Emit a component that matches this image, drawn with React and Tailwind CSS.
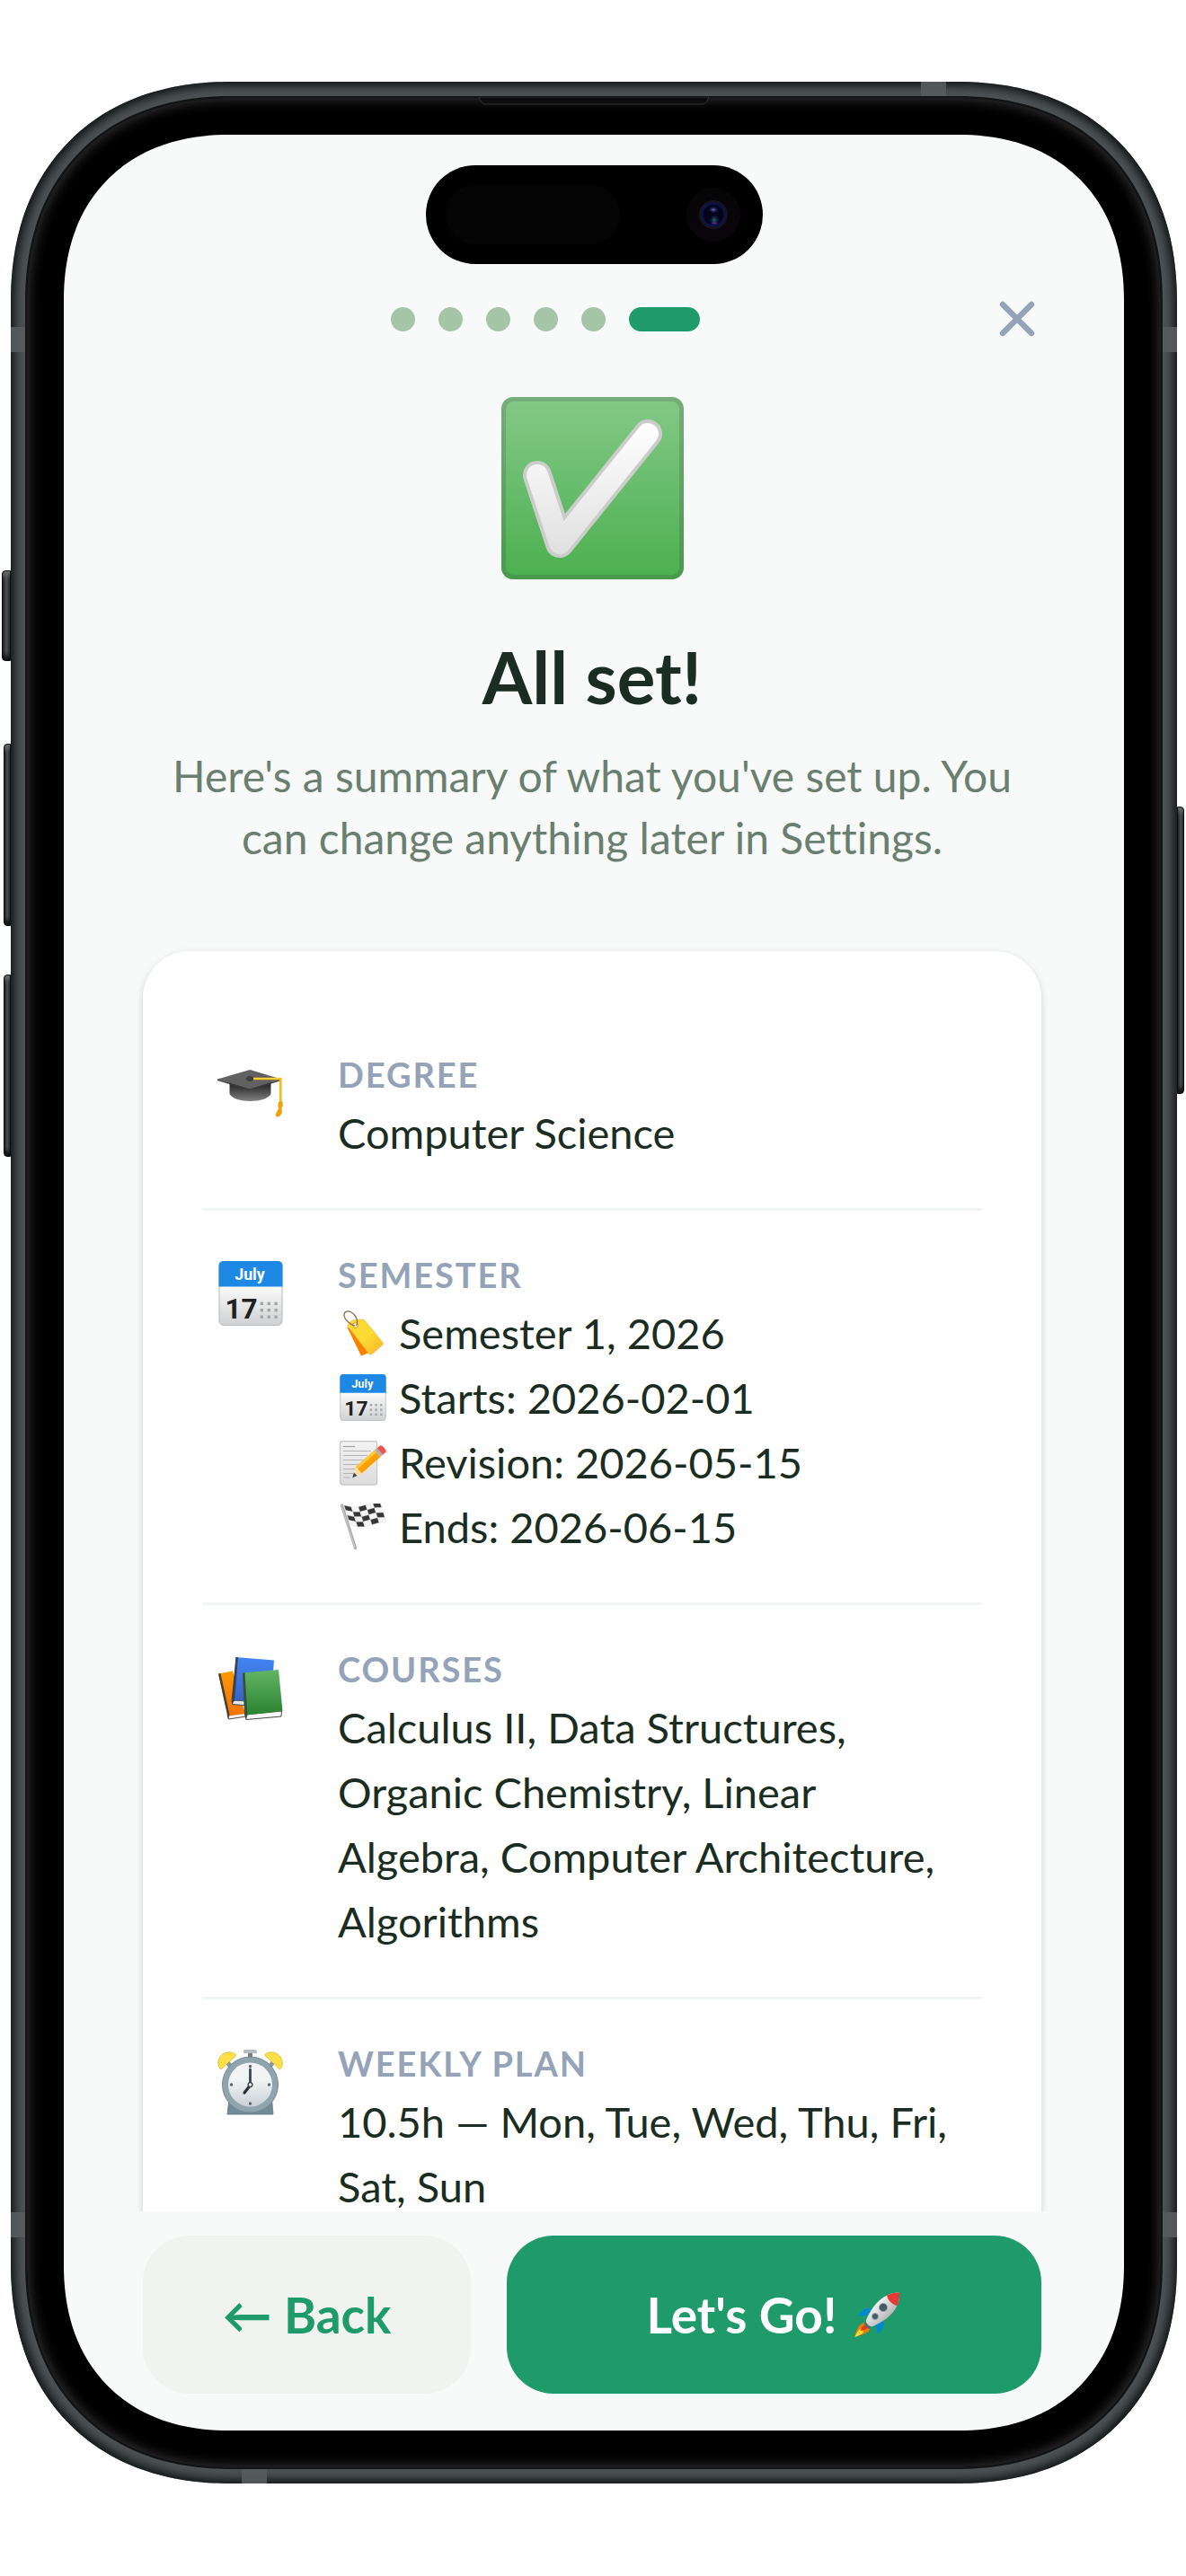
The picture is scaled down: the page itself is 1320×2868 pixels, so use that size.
import { useState } from "react";
import clsx from "clsx";

const STEPS = 6;

function CheckEmoji({ className }) {
  return (
    <svg viewBox="0 0 203 203" className={className} aria-hidden="true">
      <defs>
        <linearGradient id="check-bg" x1="0" y1="0" x2="0" y2="1">
          <stop offset="0" stopColor="#84c987" />
          <stop offset="1" stopColor="#4bb04f" />
        </linearGradient>
        <linearGradient id="check-tick" gradientUnits="userSpaceOnUse" x1="0" y1="30" x2="0" y2="175">
          <stop offset="0" stopColor="#ffffff" />
          <stop offset="1" stopColor="#e0e0e0" />
        </linearGradient>
      </defs>
      <rect width="203" height="203" rx="13" fill="url(#check-bg)" />
      <rect x="2.5" y="2.5" width="198" height="198" rx="11" fill="none" stroke="#424242" strokeOpacity="0.2" strokeWidth="5" />
      <path d="M40 87 L65 163 L163 41" fill="none" stroke="#cbcdcb" strokeWidth="32" strokeLinecap="round" strokeLinejoin="round" />
      <path d="M40 87 L65 163 L163 41" fill="none" stroke="url(#check-tick)" strokeWidth="24" strokeLinecap="round" strokeLinejoin="round" />
    </svg>
  );
}

function CapEmoji({ className }) {
  return (
    <svg viewBox="0 0 72 72" className={className} overflow="visible" aria-hidden="true">
      <defs>
        <linearGradient id="cap-body" x1="0" y1="0" x2="0" y2="1">
          <stop offset="0.2" stopColor="#2f2f2f" />
          <stop offset="1" stopColor="#828282" />
        </linearGradient>
      </defs>
      <path d="M12.5 24 V37 C15 42 25 45 35.5 45 C46 45 56 42 58.5 37 V24 Z" fill="url(#cap-body)" />
      <path d="M-1 20.5 L35.2 10 L70 20.5 L35.2 31.5 Z" fill="#616161" />
      <path d="M-1 20.5 L35.2 31.5 L70 20.5 V22 L35.2 33 L-1 22 Z" fill="#3c3c3c" />
      <ellipse cx="35" cy="20" rx="3.5" ry="2.4" fill="#424242" stroke="#333" strokeWidth="0.8" />
      <path d="M39 20 H69.3 V48" fill="none" stroke="#fdb813" strokeWidth="2.6" />
      <path d="M40 19.6 H68" stroke="#ffd54f" strokeWidth="1.2" />
      <path d="M67.5 46 H71 L71.5 50 L70 53 C72 57 69 63 65 62 C63 60 66 56 67.5 53 L66.6 49 Z" fill="#f5a300" stroke="#e08c00" strokeWidth="0.6" />
    </svg>
  );
}

function CalendarEmoji({ className }) {
  const dots = [48.5, 56.5, 64.5];
  return (
    <svg viewBox="0 0 72 73" className={className} aria-hidden="true">
      <defs>
        <linearGradient id="cal-page" x1="0" y1="0" x2="0" y2="1">
          <stop offset="0.4" stopColor="#fafafa" />
          <stop offset="1" stopColor="#cfd0d1" />
        </linearGradient>
      </defs>
      <rect x="0.5" y="0.5" width="71" height="72" rx="5" fill="url(#cal-page)" stroke="#b4b6b8" />
      <path d="M0 29 V5 A5 5 0 0 1 5 0 H67 A5 5 0 0 1 72 5 V29 Z" fill="#1e88e5" />
      <text x="35" y="21" textAnchor="middle" fontFamily="Roboto, sans-serif" fontWeight="700" fontSize="18" fill="#fff">
        July
      </text>
      <text x="7" y="65" fontFamily="Roboto, sans-serif" fontWeight="700" fontSize="32" fill="#212121">
        17
      </text>
      {[48, 55.5, 63].map((y) => dots.map((x) => <rect key={`${x}-${y}`} x={x - 1.7} y={y - 1.7} width="3.4" height="3.4" fill="#a3a5a7" />))}
    </svg>
  );
}

function TagEmoji({ className }) {
  return (
    <svg viewBox="0 0 52 52" className={className} aria-hidden="true">
      <defs>
        <linearGradient id="tag-front" x1="0" y1="0" x2="1" y2="1">
          <stop offset="0" stopColor="#fdd835" />
          <stop offset="0.5" stopColor="#fddb33" />
          <stop offset="1" stopColor="#f8b62a" />
        </linearGradient>
      </defs>
      <path d="M8.5 20 L24 51.5 L33 48 L22 20 Z" fill="#fb8100" />
      <path d="M9 18.5 C9 16 12 13 15 11.7 L26 11 L28.3 12.5 L48.5 37.5 L47.5 39.5 L35.5 50 L33 49.5 Z" fill="url(#tag-front)" stroke="#f0b429" strokeWidth="0.7" />
      <circle cx="17.5" cy="17.5" r="3" fill="#fff3c4" stroke="#c79a2a" strokeWidth="1" />
      <path d="M17 18 C12 17 5 11 5 6 C5 2 9 0.8 13 3 C18 6 21.5 13 18.5 18" fill="none" stroke="#8d6e4f" strokeWidth="1.3" />
    </svg>
  );
}

function MemoEmoji({ className }) {
  return (
    <svg viewBox="0 0 52 52" className={className} aria-hidden="true">
      <defs>
        <linearGradient id="memo-page" x1="0" y1="0" x2="0" y2="1">
          <stop offset="0" stopColor="#f3f3f3" />
          <stop offset="1" stopColor="#dcdcdc" />
        </linearGradient>
      </defs>
      <rect x="0.6" y="2.6" width="41" height="48.5" rx="2.5" fill="url(#memo-page)" stroke="#c4c4c4" strokeWidth="1.1" />
      <path d="M4 8.5 H17" stroke="#9e9e9e" strokeWidth="1.2" />
      <path d="M4 13.5 H35 M4 18.5 H31 M4 23.5 H28 M4 28.5 H24 M4 33.5 H19 M4 38.5 H15 M4 43 H12" stroke="#b4b4b4" strokeWidth="1.2" />
      <path d="M18 31 L39 12.5 L45.5 20 L24.5 38.5 Z" fill="#ffa000" />
      <path d="M18 31 L39 12.5 L41 15 L20 33.5 Z" fill="#ffc93c" />
      <path d="M18 31 L24.5 38.5 L14.5 43 Z" fill="#ffe0a3" />
      <path d="M16 37.5 L19.5 41 L14.2 43.2 Z" fill="#424242" />
      <path d="M39 12.5 L41.5 10.3 L48 17.8 L45.5 20 Z" fill="#a9b4ba" />
      <path d="M41.5 10.3 L45.2 7.3 C47 6.3 52.5 12.5 51.7 14.5 L48 17.8 Z" fill="#ef5350" />
    </svg>
  );
}

function FlagEmoji({ className }) {
  const cols = 5;
  const rows = 4;
  const at = (u, v) => {
    const x = 5 + 40 * u + 7 * v;
    const y = 2 + 22 * v + 2.4 * Math.sin(u * 5.2) - u;
    return `${x} ${y}`;
  };
  const cells = [];
  for (let r = 0; r < rows; r++) {
    for (let c = 0; c < cols; c++) {
      cells.push({
        d: `M${at(c / cols, r / rows)} L${at((c + 1) / cols, r / rows)} L${at((c + 1) / cols, (r + 1) / rows)} L${at(c / cols, (r + 1) / rows)} Z`,
        dark: (r + c) % 2 === 0,
      });
    }
  }
  return (
    <svg viewBox="0 0 52 52" className={className} aria-hidden="true">
      {cells.map((cell) => (
        <path key={cell.d} d={cell.d} fill={cell.dark ? "#363636" : "#f5f5f5"} stroke="#d0d0d0" strokeWidth="0.3" />
      ))}
      <path d="M2.5 2 L17.5 49.5" stroke="#a3a5a7" strokeWidth="3.2" strokeLinecap="round" />
      <path d="M2.2 2 L17 49" stroke="#c9cbcc" strokeWidth="1.2" strokeLinecap="round" />
    </svg>
  );
}

function BooksEmoji({ className }) {
  return (
    <svg viewBox="0 0 72 72" className={className} overflow="visible" aria-hidden="true">
      <defs>
        <linearGradient id="book-orange" x1="0" y1="0" x2="0" y2="1">
          <stop offset="0" stopColor="#ff9800" />
          <stop offset="1" stopColor="#f57200" />
        </linearGradient>
        <linearGradient id="book-blue" x1="0" y1="0" x2="0" y2="1">
          <stop offset="0" stopColor="#4285f4" />
          <stop offset="1" stopColor="#3a62c4" />
        </linearGradient>
        <linearGradient id="book-green" x1="0" y1="0" x2="0" y2="1">
          <stop offset="0" stopColor="#62b565" />
          <stop offset="1" stopColor="#2c8231" />
        </linearGradient>
      </defs>
      <path d="M10 66 L29 61.5 L31 68 L11.5 71 Z" fill="#f2f2f2" stroke="#4a4a4a" strokeWidth="1" />
      <path d="M0 20.5 L16 17.5 L30 65 L10.5 67.5 Z" fill="url(#book-orange)" />
      <path d="M0 20.5 L2.5 20 L12.5 66 L11 71 Z" fill="#424242" />
      <path d="M15.5 50 L34 51 L34 56 L15.5 54.5 Z" fill="#e6e8ec" stroke="#4a4a4a" strokeWidth="1" />
      <path d="M19.5 2 L62 5.5 L58.5 52 L16 50 Z" fill="url(#book-blue)" />
      <path d="M19.5 2 L22 2.2 L18 50 L15.5 54.5 L14.5 51 Z" fill="#3b4252" />
      <path d="M30 66 L70.5 62 L70 68 L31 71.5 Z" fill="#f7f7f7" stroke="#4a4a4a" strokeWidth="1" />
      <path d="M27 19.5 L67 16 L71.5 62 L30.5 66.5 Z" fill="url(#book-green)" />
      <path d="M27 19.5 L29.5 19.3 L32.5 66 L31 71.5 L29 66 Z" fill="#38513a" />
    </svg>
  );
}

function ClockEmoji({ className }) {
  return (
    <svg viewBox="0 0 72 72" className={className} overflow="visible" aria-hidden="true">
      <defs>
        <linearGradient id="clock-face" x1="0" y1="0" x2="0" y2="1">
          <stop offset="0.4" stopColor="#f1f3f4" />
          <stop offset="1" stopColor="#c8d0d6" />
        </linearGradient>
      </defs>
      <path d="M12 54 L10 72 H61 L59.5 54 Z" fill="#738b98" stroke="#64798a" strokeWidth="0.8" />
      <path d="M28 1 Q28 0 30 0 H41 Q43 0 43 1.5 V4 H28 Z" fill="#b6bcc0" />
      <path d="M33 4 H38 V9 H33 Z" fill="#7b7f82" />
      <path d="M14 19 L10 14 M57 19 L61 14" stroke="#8a979e" strokeWidth="5" />
      <path d="M3 22 C-2 18 -1 9 5 5 C10 2 16 2 20 6 Z" fill="#fde047" stroke="#dcb62c" strokeWidth="0.8" />
      <path d="M68.5 22 C73 18 72 9 66 5 C61 2 55 2 51.5 6 Z" fill="#fde047" stroke="#dcb62c" strokeWidth="0.8" />
      <circle cx="35.5" cy="39" r="31" fill="#90a4ae" stroke="#748a96" strokeWidth="1" />
      <circle cx="35.5" cy="39" r="24.5" fill="url(#clock-face)" />
      <g fill="#5c6468">
        <circle cx="35.5" cy="18.5" r="1.7" />
        <circle cx="35.5" cy="60" r="1.7" />
        <circle cx="14.5" cy="39" r="1.7" />
        <circle cx="56.5" cy="39" r="1.7" />
      </g>
      <path d="M35.5 37 V22" stroke="#37474f" strokeWidth="2.8" strokeLinecap="round" />
      <path d="M34.5 41 L29 48" stroke="#263238" strokeWidth="3.2" strokeLinecap="round" />
      <circle cx="35.5" cy="39" r="2.4" fill="#eceff1" stroke="#37474f" strokeWidth="1.4" />
    </svg>
  );
}

function RocketEmoji({ className }) {
  return (
    <svg viewBox="0 0 52 52" className={className} aria-hidden="true">
      <defs>
        <linearGradient id="rocket-hull" x1="0" y1="0" x2="1" y2="1">
          <stop offset="0.25" stopColor="#fafafa" />
          <stop offset="0.8" stopColor="#a8a8a8" />
        </linearGradient>
      </defs>
      <path d="M19 19 C12 18 6 22 4 28 L14 27 Z" fill="#0288d1" />
      <path d="M32 32 C34 38 31 44 26 47 L23 38 Z" fill="#0288d1" />
      <path d="M11 35 C5 36 2 43 0.5 51 C8 48 16 47 17.5 41 Z" fill="#f57c00" />
      <path d="M9 41 C5 42 2 46 0.5 51 C5 49 8 48 10 46 Z" fill="#fdd835" />
      <path d="M13 37 C9 38 7 41 7 44 C11 43 14 43 15 40 Z" fill="#d84315" />
      <path d="M12 34 L19 41 L16 42 L10.5 36.5 Z" fill="#546e7a" />
      <path d="M50 1.5 C36 1 22 11 13 32 C12 35 17 40.5 20.5 39 C41 30 51 17 50 1.5 Z" fill="url(#rocket-hull)" />
      <path d="M50 1.5 C45 1 40 2.5 36 4.5 C37 10 42 15 47.5 16 C49.5 11 50.5 6 50 1.5 Z" fill="#e53935" />
      <circle cx="32" cy="18" r="4.6" fill="#455a64" stroke="#90a4ae" strokeWidth="1" />
      <circle cx="23" cy="28" r="3.5" fill="#455a64" stroke="#90a4ae" strokeWidth="1" />
    </svg>
  );
}

const summary = [
  { label: "Degree", icon: CapEmoji, text: "Computer Science" },
  {
    label: "Semester",
    icon: CalendarEmoji,
    lines: [
      { icon: TagEmoji, text: "Semester 1, 2026" },
      { icon: CalendarEmoji, text: "Starts: 2026-02-01" },
      { icon: MemoEmoji, text: "Revision: 2026-05-15" },
      { icon: FlagEmoji, text: "Ends: 2026-06-15" },
    ],
  },
  {
    label: "Courses",
    icon: BooksEmoji,
    text: "Calculus II, Data Structures, Organic Chemistry, Linear Algebra, Computer Architecture, Algorithms",
  },
  { label: "Weekly plan", icon: ClockEmoji, text: "10.5h — Mon, Tue, Wed, Thu, Fri, Sat, Sun" },
];

function SummaryRow({ item }) {
  const Icon = item.icon;
  return (
    <li className="flex gap-11 border-b-3 border-[#f1f5f5] pt-11 pb-12">
      <div className="flex w-[107px] shrink-0 justify-center pt-3">
        <Icon className="size-[72px]" />
      </div>
      <div className="min-w-0 flex-1 pr-5">
        <h2 className="mb-0.5 text-[38px] leading-[54px] font-bold tracking-wider text-[#94a3b8] uppercase">{item.label}</h2>
        {item.text && <p className="text-[47px] leading-[72px]">{item.text}</p>}
        {item.lines?.map((line) => (
          <p key={line.text} className="flex items-center gap-3.5 pl-0.5 text-[47px] leading-[72px]">
            <line.icon className="size-13 shrink-0" />
            {line.text}
          </p>
        ))}
      </div>
    </li>
  );
}

function StepDots({ current }) {
  return (
    <div className="flex flex-1 justify-center gap-[26px]">
      {Array.from({ length: STEPS }, (_, i) => (
        <span key={i} className={clsx("h-[27px] rounded-full", i === current ? "w-[79px] bg-[#1f9b6b]" : "w-[27px] bg-[#a4c5a6]")} />
      ))}
    </div>
  );
}

function DynamicIsland() {
  return (
    <div className="mx-auto mt-[34px] flex h-[110px] w-[375px] shrink-0 items-center justify-between rounded-full bg-black pr-[25px] pl-[22px]">
      <span className="h-[66px] w-[194px] rounded-full bg-[#040404]" />
      <svg viewBox="0 0 60 60" className="size-[60px]" aria-hidden="true">
        <defs>
          <radialGradient id="lens-top">
            <stop offset="0" stopColor="#6a6fb0" />
            <stop offset="1" stopColor="#10123f" stopOpacity="0" />
          </radialGradient>
          <radialGradient id="lens-bottom">
            <stop offset="0" stopColor="#1f6f7a" />
            <stop offset="1" stopColor="#06203a" stopOpacity="0" />
          </radialGradient>
          <linearGradient id="lens-ring" x1="0" y1="0" x2="0" y2="1">
            <stop offset="0" stopColor="#050505" />
            <stop offset="1" stopColor="#0b050c" />
          </linearGradient>
        </defs>
        <circle cx="30" cy="30" r="30" fill="url(#lens-ring)" />
        <circle cx="30" cy="30" r="16" fill="#141424" />
        <circle cx="30" cy="30" r="12" fill="#03041c" stroke="#0a1158" strokeWidth="1.5" />
        <ellipse cx="30" cy="24.5" rx="6" ry="4" fill="url(#lens-top)" />
        <circle cx="31" cy="36" r="6" fill="url(#lens-bottom)" />
        <ellipse cx="31" cy="39.5" rx="3" ry="1.2" fill="#7a2a9a" opacity="0.7" />
      </svg>
    </div>
  );
}

// Side keys and antenna lines sit on the metal rail of the phone
function FrameDetails() {
  const key = "absolute border border-[#0c0e0f] bg-linear-to-r from-[#1d2021] via-[#4c5052] to-[#26292a] shadow-[inset_0_10px_6px_-6px_#6a6e70,inset_0_-10px_5px_-5px_#111]";
  const band = "absolute bg-[#575c5e]/90";
  return (
    <div aria-hidden="true">
      <span className={clsx(key, "top-[544px] -left-2.5 h-[101px] w-2.5 rounded-l-sm")} />
      <span className={clsx(key, "top-[737px] -left-2 h-[203px] w-2 rounded-l-sm")} />
      <span className={clsx(key, "top-[994px] -left-2 h-[203px] w-2 rounded-l-sm")} />
      <span className={clsx(key, "top-[807px] -right-2 h-[320px] w-2 rounded-r-sm")} />
      <span className={clsx(band, "top-[273px] left-0 h-7 w-4")} />
      <span className={clsx(band, "top-[273px] right-0 h-7 w-4")} />
      <span className={clsx(band, "bottom-[274px] left-0 h-7 w-4")} />
      <span className={clsx(band, "right-[257px] top-0 h-4 w-7")} />
      <span className={clsx(band, "right-0 bottom-[274px] h-7 w-4")} />
      <span className={clsx(band, "bottom-0 left-[257px] h-4 w-7")} />
      <svg viewBox="0 0 256 10" className="absolute top-[17px] left-1/2 h-2.5 w-64 -translate-x-1/2">
        <path d="M0 0 Q2 7 6 8 H250 Q254 7 256 0 Z" fill="#0d0d0d" stroke="#333" strokeWidth="1" />
      </svg>
    </div>
  );
}

export default function App() {
  const [step, setStep] = useState(STEPS - 1);

  return (
    <div className="flex h-screen bg-white pt-[91px] pr-2.5 pb-[103px] pl-3 font-[Lato,sans-serif] text-[#1b2d22]">
      <div className="relative flex min-w-0 flex-1 rounded-[245px] bg-[#4e5355] p-4 shadow-[inset_0_0_12px_4px_#0c1011] [corner-shape:superellipse(1.15)]">
        <div className="flex min-w-0 flex-1 rounded-[229px] border-2 border-[#121516] bg-black p-[41px] shadow-[inset_0_0_14px_2px_#333333] [corner-shape:superellipse(1.15)]">
          <main className="flex min-w-0 flex-1 flex-col overflow-hidden rounded-[184px] bg-[#f7faf9] [corner-shape:superellipse(1.15)]">
            <DynamicIsland />

            <header className="mt-[34px] flex shrink-0 items-center pr-23 pl-22">
              <StepDots current={step} />
              <button type="button" aria-label="Close" className="flex w-26 justify-end">
                <svg viewBox="0 0 54 54" className="size-[54px]" fill="none" stroke="#94a3b8" strokeWidth="6.5" strokeLinecap="round" aria-hidden="true">
                  <path d="M11 11 L43 43 M43 11 L11 43" />
                </svg>
              </button>
            </header>

            <div className="min-h-0 flex-1 overflow-y-auto pt-15 pr-23 pl-22 [scrollbar-width:none]">
              <CheckEmoji className="mx-auto size-[203px]" />
              <h1 className="mt-14 text-center text-[80px] leading-[104px] font-bold">All set!</h1>
              <p className="mt-6 px-6 text-center text-[48px] leading-[69px] text-[#6b7f70] [font-variant-ligatures:none]">
                Here's a summary of what you've set up. You can change anything later in Settings.
              </p>
              <ul className="mt-23 rounded-[52px] bg-white p-[66px] shadow-[0_3px_8px_rgba(0,0,0,0.16)]">
                {summary.map((item) => (
                  <SummaryRow key={item.label} item={item} />
                ))}
              </ul>
            </div>

            <footer className="flex shrink-0 gap-10 pt-[27px] pr-23 pb-[41px] pl-22 text-[55px] font-bold">
              <button type="button" onClick={() => setStep(Math.max(step - 1, 0))} className="h-44 w-[365px] rounded-[52px] bg-[#f0f3f0] text-[#1f9b6b]">
                ← Back
              </button>
              <button type="button" className="flex h-44 flex-1 items-center justify-center gap-5 rounded-[52px] bg-[#1f9b6b] text-white">
                Let's Go!
                <RocketEmoji className="size-13" />
              </button>
            </footer>
          </main>
        </div>
        <FrameDetails />
      </div>
    </div>
  );
}
